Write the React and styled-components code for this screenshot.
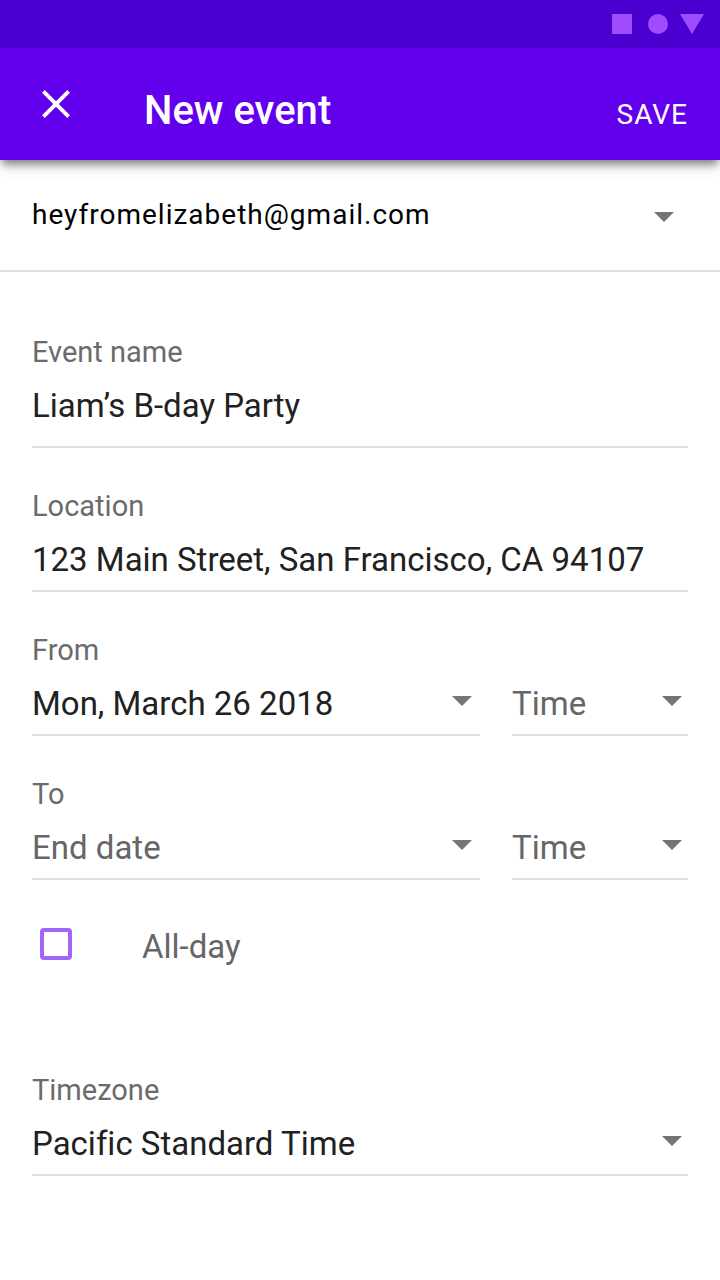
import React from "react";
import styled, { createGlobalStyle } from "styled-components";

const GlobalStyle = createGlobalStyle`
  *, *::before, *::after { box-sizing: border-box; }
  body {
    margin: 0;
    background: #fff;
    font-family: Roboto, "Liberation Sans", sans-serif;
    color: #212121;
  }
  button, input, select {
    font: inherit;
    font-variant-ligatures: none;
    color: inherit;
  }
`;

const StatusBar = styled.div`
  display: flex;
  justify-content: flex-end;
  align-items: center;
  height: 48px;
  padding: 0 16px;
  background: #4b00d1;
`;

const AppBar = styled.header`
  display: flex;
  align-items: center;
  gap: 64px;
  height: 112px;
  padding: 0 32px;
  background: #6200ee;
  color: #fff;
  box-shadow: 0 6px 8px -2px rgba(0, 0, 0, 0.45), 0 8px 14px rgba(0, 0, 0, 0.1);
`;

const BarButton = styled.button`
  display: block;
  padding: 0;
  border: 0;
  background: none;
  cursor: pointer;
  font-size: 28px;
  line-height: 32px;
  letter-spacing: 1px;
`;

const BarText = styled.div`
  flex: 1;
  display: flex;
  justify-content: space-between;
  align-items: baseline;
  padding-top: 14px;
`;

const Title = styled.h1`
  margin: 0;
  font-size: 40px;
  line-height: 48px;
  font-weight: 500;
`;

const SelectBox = styled.div`
  display: grid;
  padding-bottom: ${(p) => p.$bottom || 0}px;
  border-bottom: ${(p) => (p.$bottom ? "2px solid #e0e0e0" : "0")};

  > * { grid-area: 1 / 1; }
  > svg {
    justify-self: end;
    margin: 14px ${(p) => p.$inset}px 0 0;
    pointer-events: none;
  }
`;

const SelectInput = styled.select`
  appearance: none;
  width: 100%;
  height: ${(p) => (p.$small ? 32 : 42)}px;
  padding: 0;
  border: 0;
  border-radius: 0;
  outline: 0;
  background: none;
  font-size: ${(p) => (p.$small ? 28 : 33)}px;
  letter-spacing: ${(p) => (p.$small ? "1px" : "normal")};
  color: ${(p) => (p.$muted ? "#666" : p.$small ? "#000" : "#212121")};
`;

const Account = styled.div`
  padding: 38px 32px 40px;
  border-bottom: 2px solid #e0e0e0;
`;

const Form = styled.form`
  display: flex;
  flex-direction: column;
  gap: 42px;
  padding: 64px 32px;
`;

const Field = styled.div`
  display: flex;
  flex-direction: column;
  gap: 16px;
`;

const Label = styled.label`
  font-size: 29px;
  line-height: 32px;
  color: #6b6b6b;
`;

const TextInput = styled.input`
  width: 100%;
  height: ${(p) => 44 + p.$bottom}px;
  padding: 0 0 ${(p) => p.$bottom}px;
  border: 0;
  border-bottom: 2px solid #e0e0e0;
  border-radius: 0;
  outline: 0;
  background: none;
  font-size: 33px;
`;

const DateRow = styled.div`
  display: grid;
  grid-template-columns: minmax(0, 1fr) 176px;
  gap: 32px;
`;

const CheckRow = styled.label`
  display: flex;
  align-items: flex-start;
  margin: 4px 0 64px;
  font-size: 33px;
  line-height: 42px;
  color: #666;
`;

const Checkbox = styled.input`
  appearance: none;
  width: 32px;
  height: 32px;
  margin: 2px 70px 0 8px;
  border: 4px solid #a166f8;
  border-radius: 4px;

  &:checked { background: #a166f8; }
`;

const Arrow = () => (
  <svg width="20" height="10" viewBox="0 0 20 10" aria-hidden="true">
    <path d="M0 0h20L10 10z" fill="#757575" />
  </svg>
);

function Select({ id, label, options, small, muted, inset = 6, bottom }) {
  return (
    <SelectBox $inset={inset} $bottom={bottom}>
      <SelectInput id={id} aria-label={label} $small={small} $muted={muted}>
        {options.map((o) => (
          <option key={o}>{o}</option>
        ))}
      </SelectInput>
      <Arrow />
    </SelectBox>
  );
}

export default function App() {
  return (
    <>
      <GlobalStyle />
      <StatusBar>
        <svg width="92" height="20" viewBox="0 0 92 20" fill="#a04dff" aria-hidden="true">
          <path d="M0 0h20v20H0z" />
          <circle cx="46" cy="10" r="10" />
          <path d="M68 0h24L80 20z" />
        </svg>
      </StatusBar>
      <AppBar>
        <BarButton type="button" aria-label="Close">
          <svg width="48" height="48" viewBox="0 0 24 24" fill="#fff" display="block" aria-hidden="true">
            <path d="M19 6.41 17.59 5 12 10.59 6.41 5 5 6.41 10.59 12 5 17.59 6.41 19 12 13.41 17.59 19 19 17.59 13.41 12z" />
          </svg>
        </BarButton>
        <BarText>
          <Title>New event</Title>
          <BarButton type="submit" form="event">SAVE</BarButton>
        </BarText>
      </AppBar>
      <Account>
        <Select label="Account" options={["heyfromelizabeth@gmail.com"]} small inset={14} />
      </Account>
      <Form id="event" onSubmit={(e) => e.preventDefault()}>
        <Field>
          <Label htmlFor="name">Event name</Label>
          <TextInput id="name" defaultValue="Liam’s B-day Party" $bottom={20} />
        </Field>
        <Field>
          <Label htmlFor="location">Location</Label>
          <TextInput id="location" defaultValue="123 Main Street, San Francisco, CA 94107" $bottom={10} />
        </Field>
        <Field>
          <Label htmlFor="from">From</Label>
          <DateRow>
            <Select id="from" options={["Mon, March 26 2018"]} inset={8} bottom={10} />
            <Select label="Start time" options={["Time"]} muted bottom={10} />
          </DateRow>
        </Field>
        <Field>
          <Label htmlFor="to">To</Label>
          <DateRow>
            <Select id="to" options={["End date"]} muted inset={8} bottom={10} />
            <Select label="End time" options={["Time"]} muted bottom={10} />
          </DateRow>
        </Field>
        <CheckRow>
          <Checkbox type="checkbox" />
          All-day
        </CheckRow>
        <Field>
          <Label htmlFor="timezone">Timezone</Label>
          <Select id="timezone" options={["Pacific Standard Time"]} bottom={10} />
        </Field>
      </Form>
    </>
  );
}
